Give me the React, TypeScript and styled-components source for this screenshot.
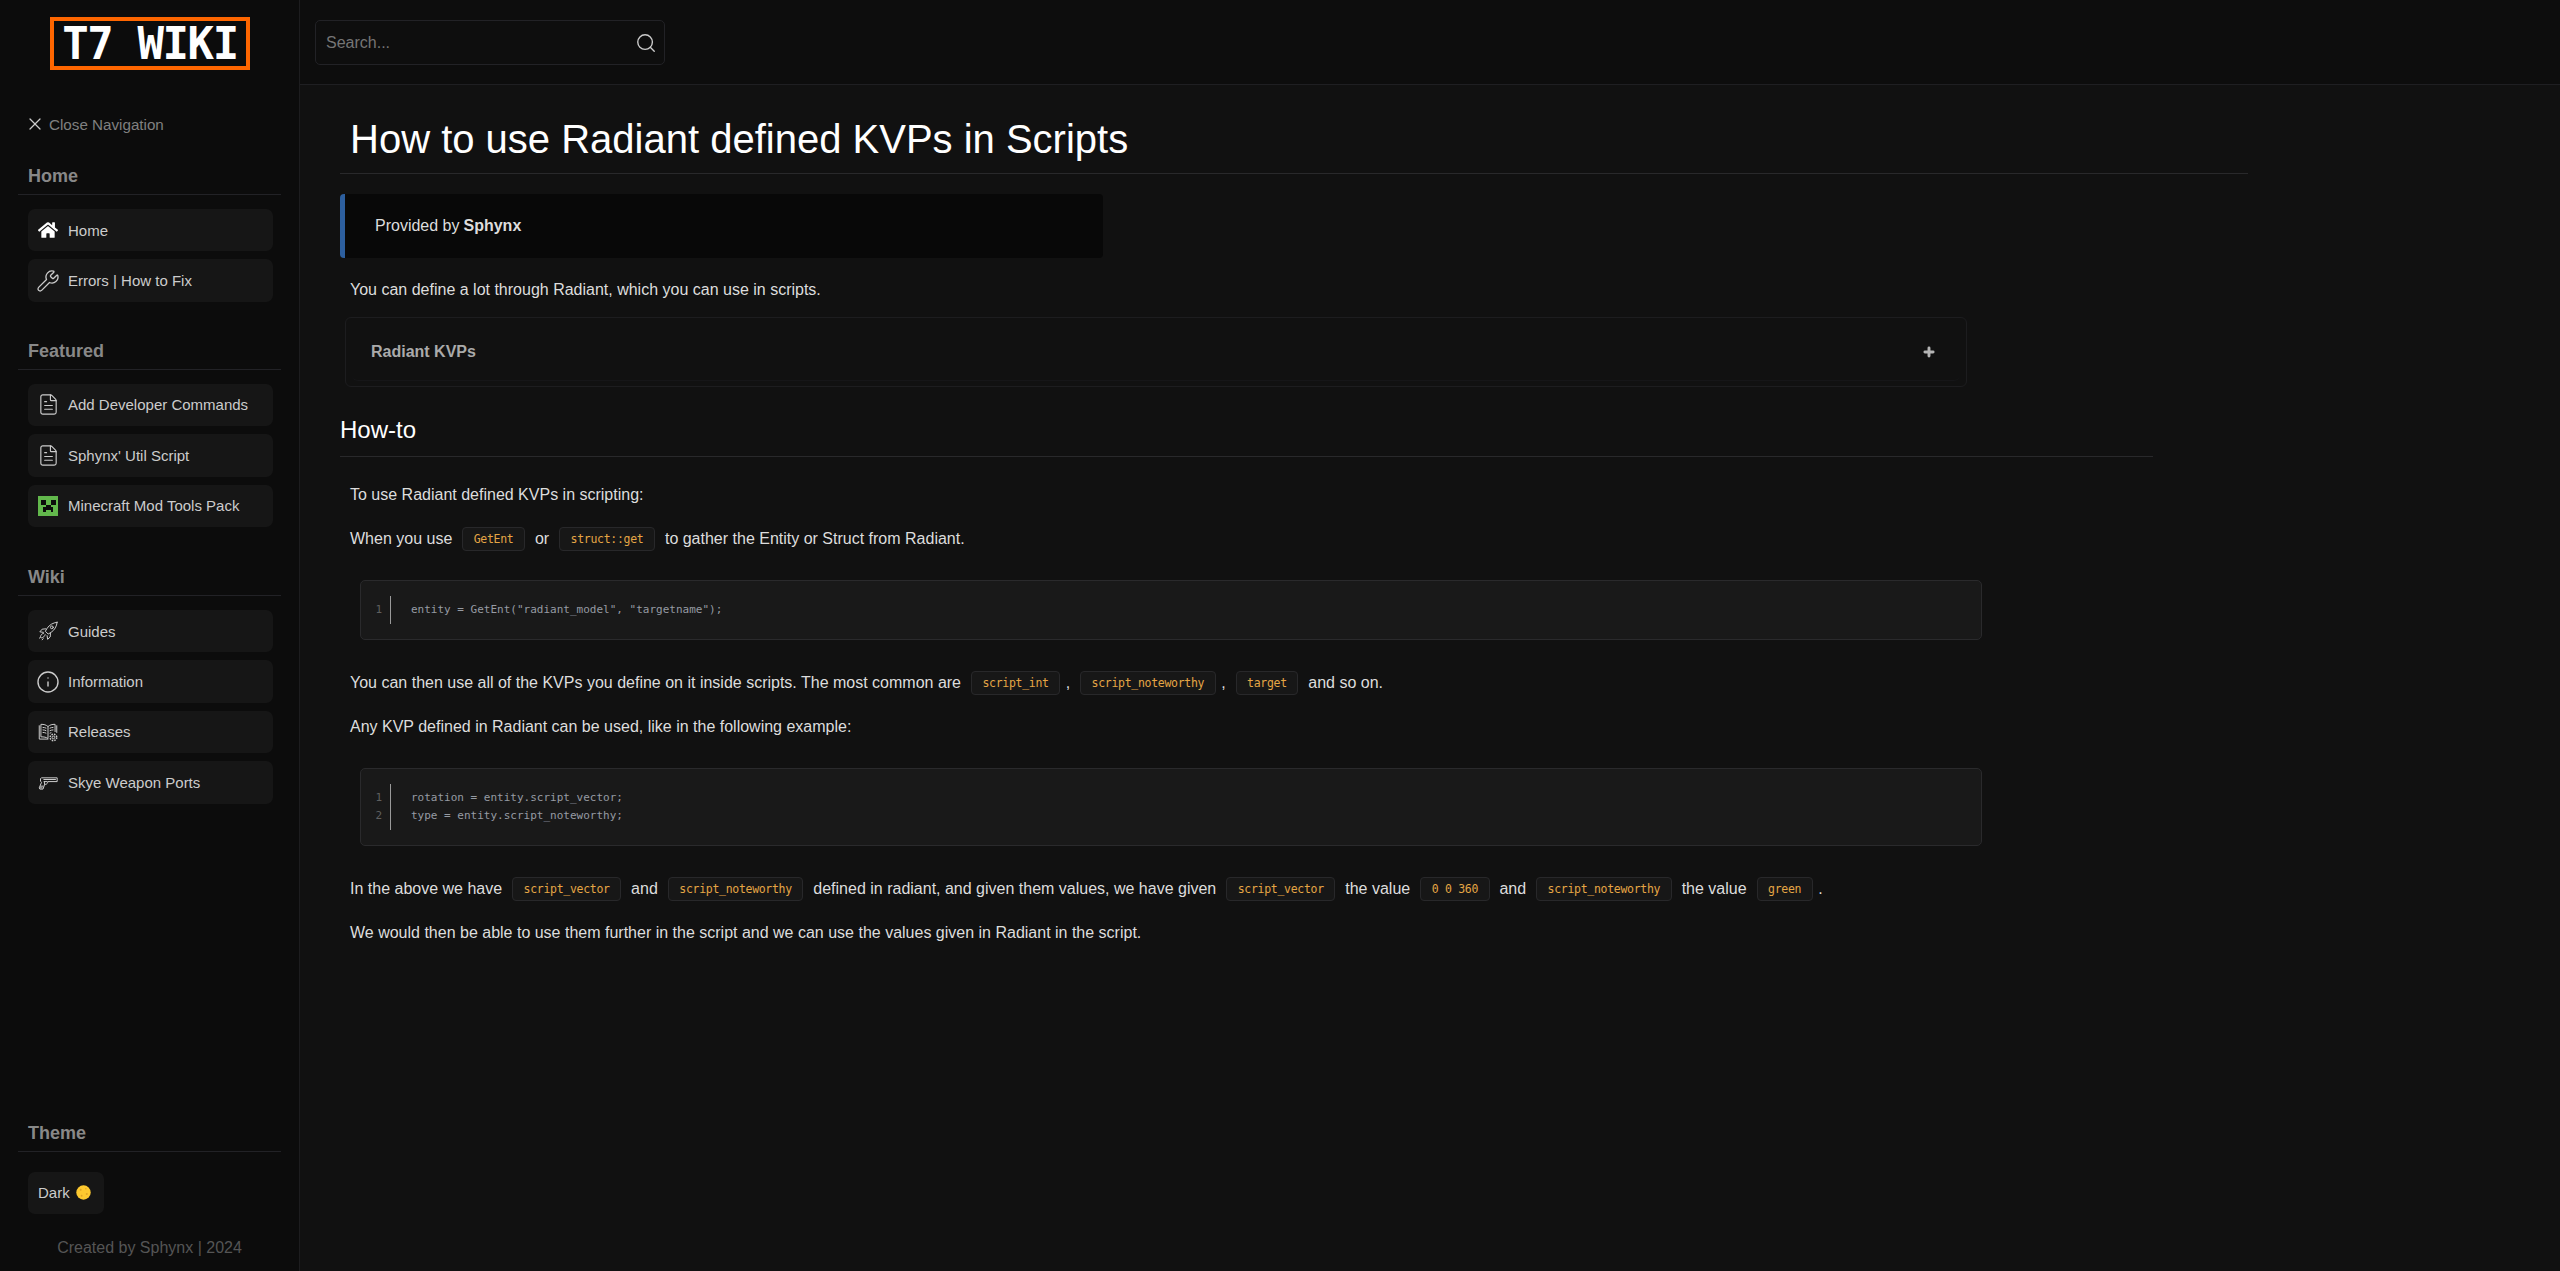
import React from 'react';
import styled, { createGlobalStyle } from 'styled-components';
import { FaHome } from 'react-icons/fa';
import { Wrench, FileText, Info, Search, X, Plus } from 'lucide-react';

const GlobalStyle = createGlobalStyle`
  html, body {
    margin: 0;
    padding: 0;
    background: #111111;
  }

  * {
    box-sizing: border-box;
  }
`;

const Page = styled.div`
  display: grid;
  grid-template-columns: 300px 1fr;
  height: 1271px;
  overflow: hidden;
  font-family: "Liberation Sans", Arial, sans-serif;
  color: #dddddd;
  background: #111111;
`;

const Sidebar = styled.aside`
  display: flex;
  flex-direction: column;
  background: #0c0c0c;
  border-right: 1px solid #1d1d1f;
  padding-top: 17px;
`;

const LogoBox = styled.div`
  align-self: flex-start;
  margin-left: 50px;
  width: 200px;
  height: 53px;
  border: 4px solid #ff6600;
  display: flex;
  align-items: center;
  justify-content: center;
  font-family: "DejaVu Sans Mono", monospace;
  font-weight: 700;
  font-size: 44px;
  letter-spacing: -1.4px;
  color: #ffffff;
  white-space: nowrap;
`;

const CloseNav = styled.div`
  display: flex;
  align-items: center;
  gap: 4px;
  margin: 44px 0 0 25px;
  height: 20px;
  font-size: 15.2px;
  color: #808080;

  svg {
    color: #cccccc;
  }
`;

const NavSection = styled.section<{ $top: number }>`
  margin-top: ${(p) => p.$top}px;
`;

const SectionTitle = styled.h3`
  margin: 0 18px;
  padding: 0 10px;
  height: 28px;
  line-height: 18px;
  font-size: 18px;
  font-weight: 700;
  color: #888888;
  border-bottom: 1px solid #222226;
`;

const NavList = styled.div<{ $top?: number }>`
  display: flex;
  flex-direction: column;
  gap: 8px;
  margin: ${(p) => p.$top ?? 14}px 26px 0 28px;
`;

const NavButton = styled.a`
  display: flex;
  align-items: center;
  gap: 10px;
  height: 42.4px;
  padding: 0 10px;
  background: #161616;
  border-radius: 7px;
  font-size: 15px;
  color: #cccccc;
  white-space: nowrap;
`;

const IconSlot = styled.span`
  display: flex;
  align-items: center;
  justify-content: center;
  flex: none;
  width: 20px;
  height: 20px;

  svg {
    flex: none;
  }
`;

const ThemeButton = styled(NavButton)`
  display: inline-flex;
  gap: 6px;
  width: 76px;
`;

const BottomBlock = styled.div`
  margin-top: auto;
`;

const Credit = styled.div`
  margin: 24px 0 13px;
  height: 20px;
  line-height: 20px;
  text-align: center;
  font-size: 16px;
  color: #555555;
`;

const MainColumn = styled.div`
  display: flex;
  flex-direction: column;
  min-width: 0;
`;

const TopBar = styled.header`
  height: 85px;
  flex: none;
  padding: 20px 0 0 15px;
  background: #0d0d0d;
  border-bottom: 1px solid #1f1f22;
`;

const SearchBox = styled.div`
  display: flex;
  align-items: center;
  justify-content: space-between;
  width: 350px;
  height: 45px;
  padding: 0 7px 0 10px;
  background: #0e0e0e;
  border: 1px solid #222226;
  border-radius: 5px;
  font-size: 16px;
  color: #757575;

  svg {
    color: #cccccc;
  }
`;

const Content = styled.main`
  padding: 0 0 0 40px;
`;

const Title = styled.h1`
  margin: 0;
  width: 1908px;
  height: 89px;
  padding: 31px 0 0 10px;
  font-size: 40px;
  line-height: 46px;
  font-weight: 400;
  color: #ffffff;
  border-bottom: 1px solid #29292b;
`;

const Provided = styled.div`
  display: flex;
  align-items: center;
  margin-top: 20px;
  width: 763px;
  height: 64px;
  padding-left: 30px;
  background: #080808;
  border-left: 5px solid #2d5f9e;
  border-radius: 4px;
  font-size: 16px;
  color: #dddddd;

  strong {
    margin-left: 4px;
    font-weight: 700;
  }
`;

const Para = styled.p<{ $top: number }>`
  display: flex;
  align-items: center;
  gap: 5.5px;
  margin: ${(p) => p.$top}px 0 0 10px;
  height: 24px;
  font-size: 16px;
  line-height: 24px;
  color: #dddddd;
  white-space: pre;
`;

const Chip = styled.code`
  display: inline-flex;
  align-items: center;
  height: 24px;
  padding: 0 10.5px;
  background: #171717;
  border: 1px solid #28282a;
  border-radius: 4px;
  font-family: "DejaVu Sans Mono", monospace;
  font-size: 11.5px;
  letter-spacing: -0.3px;
  color: #e5a645;
`;

const Accordion = styled.div`
  margin: 15px 0 0 5px;
  width: 1622px;
  height: 70px;
  padding: 0 6px 6px;
  border: 1px solid #1d1d1f;
  border-radius: 6px;
`;

const AccordionSummary = styled.div`
  display: flex;
  align-items: center;
  justify-content: space-between;
  height: 63px;
  padding: 6px 24px 0 19px;
  border-bottom: 1px solid #161618;
  border-radius: 6px;
  font-size: 16px;
  font-weight: 700;
  color: #aaaaaa;

  svg {
    color: #b5b5b5;
  }
`;

const SubHeading = styled.h2`
  margin: 0;
  width: 1813px;
  height: 70px;
  padding-top: 27px;
  font-size: 24px;
  line-height: 32px;
  font-weight: 400;
  color: #ffffff;
  border-bottom: 1px solid #29292b;
`;

const CodeBlock = styled.div<{ $top: number }>`
  display: flex;
  margin: ${(p) => p.$top}px 0 0 20px;
  width: 1622px;
  padding: 15px 0;
  background: #191919;
  border: 1px solid #2a2a2c;
  border-radius: 5px;
  font-family: "DejaVu Sans Mono", monospace;
  font-size: 11px;
  line-height: 18px;
`;

const LineNumbers = styled.div`
  width: 30px;
  padding: 5px 8px 5px 0;
  text-align: right;
  color: #5f5f5f;
  border-right: 1px solid #9a9a9a;
`;

const CodeLines = styled.pre`
  margin: 0;
  padding: 5px 0 5px 20px;
  font: inherit;
  color: #969ba3;
`;

const Rocket = () => (
  <svg width="20" height="20" viewBox="0 0 24 24" fill="none" stroke="currentColor" strokeWidth="1.2" strokeLinejoin="round" strokeLinecap="round">
    <path d="M23 1.500c-5 .6-9.200 3-12 7.200l-2.200 3.600 3.400 3.400 3.600-2.200c4.200-2.800 6.600-7 7.200-12z" />
    <circle cx="16.600" cy="7.600" r="1.700" />
    <path d="M9.400 9.400 5 9.800 2.200 13l4.200.6M15 15l-.4 4.200-3 2.800-.7-4.400" />
    <path d="M6.800 14.600c-1.800.4-3.400 2-3.800 4-.2 1 .4 1.600 1.200 1.600 2.200-.2 3.800-1.800 4.400-3.800" />
    <path d="M1.600 20.600 3 19.400M5 22.600l1.200-1.400" />
  </svg>
);

const BookGear = () => (
  <svg width="20" height="20" viewBox="0 0 24 24" fill="none" stroke="currentColor" strokeWidth="1.2" strokeLinejoin="round">
    <path d="M1.500 4v16.500h11M22.500 4v9" />
    <path d="M12 5.500C10 3.500 7 2.700 3.500 2.800v15c3.500 0 6.500.4 8.500 2V5.500zM12 5.500c2-2 5-2.800 8.500-2.700V12" />
    <path d="M5.500 6.500c1.600 0 3 .3 4.500 1M5.500 9.500c1.600 0 3 .3 4.500 1M5.500 12.500c1.600 0 3 .3 4.500 1M14 7.500c1.400-.7 2.900-1 4.500-1M14 10.500c1.400-.7 2.900-1 4.500-1M14 13.500c.6-.3 1.200-.5 2-.7" />
    <circle cx="18.500" cy="18.500" r="1.600" />
    <circle cx="18.500" cy="18.500" r="3.900" strokeWidth="1.800" strokeDasharray="1.800 1.300" />
  </svg>
);

const Pistol = () => (
  <svg width="20" height="20" viewBox="0 0 24 24" fill="none" stroke="currentColor" strokeWidth="1.200" strokeLinejoin="round" strokeLinecap="round">
    <path d="M4.500 7h18.500v4.500H12l-.6 1.500c-.4 1.200-1.400 1.800-2.700 1.800H8l-2 5.700H2.200L1.500 19l2.700-6.500L3 11V8.500z" />
    <path d="M7 9h14M7.500 11.500h3.500M8 14.800l-.5-3.300" />
    <path d="M3 17h3M2.500 19h2.500" />
  </svg>
);

const Creeper = () => (
  <svg width="20" height="20" viewBox="0 0 8 8" shapeRendering="crispEdges">
    <rect width="8" height="8" fill="#62b84c" />
    <path fill="#0c0c0c" d="M1 1.500h2v2H1zM5 1.500h2v2H5zM3 3.500h2v1H3zM2 4.500h4v2H5v-1H3v1H2z" />
  </svg>
);

const Moon = () => (
  <svg width="15" height="15" viewBox="0 0 16 16">
    <circle cx="8" cy="8" r="7.700" fill="#fdc92f" />
    <circle cx="5" cy="5" r="1.100" fill="#e0a526" />
    <circle cx="10.500" cy="4" r=".8" fill="#e0a526" />
    <circle cx="6" cy="11.500" r="1" fill="#e0a526" />
    <circle cx="11.500" cy="9.500" r="1.100" fill="#e0a526" />
  </svg>
);

const sections = [
  {
    title: 'Home',
    top: 33,
    items: [
      { icon: <FaHome size={20} color="#ffffff" />, label: 'Home' },
      { icon: <Wrench size={24} strokeWidth={1.3} />, label: 'Errors | How to Fix' },
    ],
  },
  {
    title: 'Featured',
    top: 40,
    items: [
      { icon: <FileText size={23} strokeWidth={1.2} />, label: 'Add Developer Commands' },
      { icon: <FileText size={23} strokeWidth={1.2} />, label: "Sphynx' Util Script" },
      { icon: <Creeper />, label: 'Minecraft Mod Tools Pack' },
    ],
  },
  {
    title: 'Wiki',
    top: 41,
    items: [
      { icon: <Rocket />, label: 'Guides' },
      { icon: <Info size={24} strokeWidth={1.4} />, label: 'Information' },
      { icon: <BookGear />, label: 'Releases' },
      { icon: <Pistol />, label: 'Skye Weapon Ports' },
    ],
  },
];

const App = () => {
  return (
    <Page>
      <GlobalStyle />
      <Sidebar>
        <LogoBox>T7 WIKI</LogoBox>
        <CloseNav>
          <X size={20} strokeWidth={1.5} />
          Close Navigation
        </CloseNav>

        {sections.map((section) => (
          <NavSection key={section.title} $top={section.top}>
            <SectionTitle>{section.title}</SectionTitle>
            <NavList>
              {section.items.map((item) => (
                <NavButton key={item.label}>
                  <IconSlot>{item.icon}</IconSlot>
                  {item.label}
                </NavButton>
              ))}
            </NavList>
          </NavSection>
        ))}

        <BottomBlock>
          <SectionTitle>Theme</SectionTitle>
          <NavList $top={20}>
            <ThemeButton>
              Dark
              <Moon />
            </ThemeButton>
          </NavList>
          <Credit>Created by Sphynx | 2024</Credit>
        </BottomBlock>
      </Sidebar>

      <MainColumn>
        <TopBar>
          <SearchBox>
            Search...
            <Search size={22} strokeWidth={1.5} />
          </SearchBox>
        </TopBar>

        <Content>
          <Title>How to use Radiant defined KVPs in Scripts</Title>
          <Provided>
            Provided by <strong>Sphynx</strong>
          </Provided>
          <Para $top={20}>You can define a lot through Radiant, which you can use in scripts.</Para>
          <Accordion>
            <AccordionSummary>
              Radiant KVPs
              <Plus size={14} strokeWidth={5} />
            </AccordionSummary>
          </Accordion>
          <SubHeading>How-to</SubHeading>

          <Para $top={26}>To use Radiant defined KVPs in scripting:</Para>
          <Para $top={20}>
            When you use <Chip>GetEnt</Chip> or <Chip>struct::get</Chip> to gather the Entity or Struct from Radiant.
          </Para>

          <CodeBlock $top={29}>
            <LineNumbers>1</LineNumbers>
            <CodeLines>{'entity = GetEnt("radiant_model", "targetname");'}</CodeLines>
          </CodeBlock>

          <Para $top={31}>
            You can then use all of the KVPs you define on it inside scripts. The most common are <Chip>script_int</Chip>, <Chip>script_noteworthy</Chip>, <Chip>target</Chip> and so on.
          </Para>
          <Para $top={20}>Any KVP defined in Radiant can be used, like in the following example:</Para>

          <CodeBlock $top={29}>
            <LineNumbers>
              1
              <br />2
            </LineNumbers>
            <CodeLines>{'rotation = entity.script_vector;\ntype = entity.script_noteworthy;'}</CodeLines>
          </CodeBlock>

          <Para $top={31}>
            In the above we have <Chip>script_vector</Chip> and <Chip>script_noteworthy</Chip> defined in radiant, and given them values, we have given <Chip>script_vector</Chip> the value <Chip>0 0 360</Chip> and <Chip>script_noteworthy</Chip> the value <Chip>green</Chip>.
          </Para>
          <Para $top={20}>We would then be able to use them further in the script and we can use the values given in Radiant in the script.</Para>
        </Content>
      </MainColumn>
    </Page>
  );
};

export default App;
